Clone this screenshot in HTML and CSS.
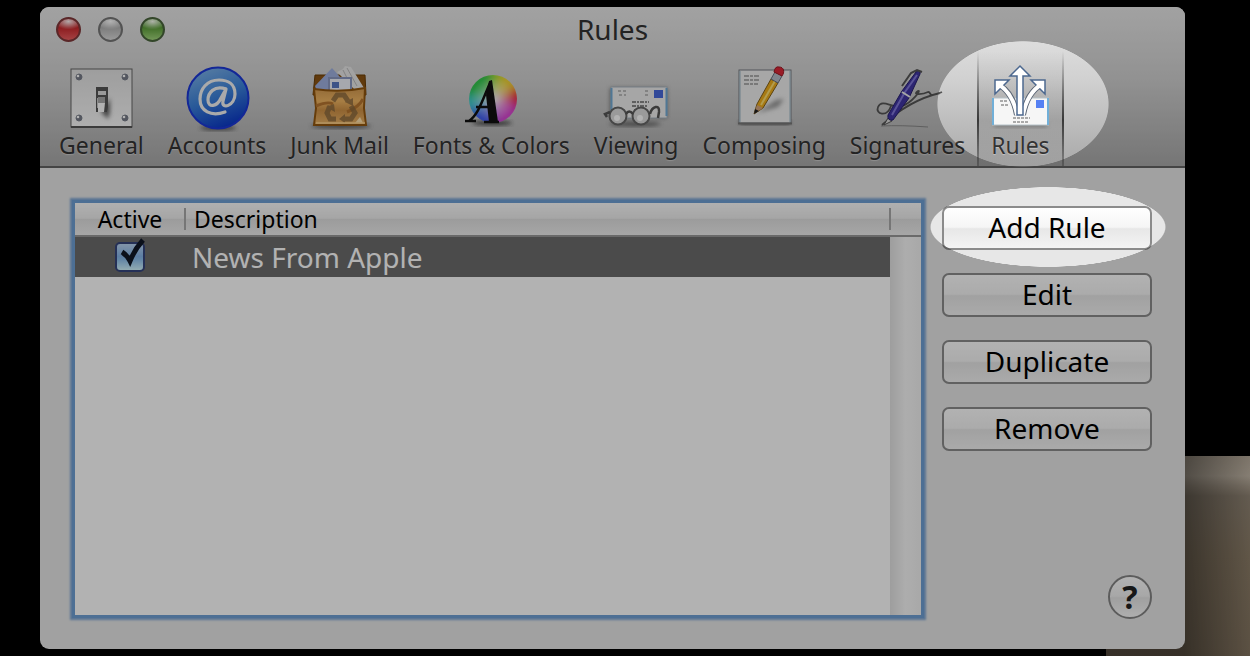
FILE: index.html
```html
<!DOCTYPE html>
<html lang="en">
<head>
<meta charset="utf-8">
<title>Rules</title>
<link rel="stylesheet" href="styles.css">
</head>
<body>
<main class="window">
  <header class="chrome">
    <div class="titlebar">
      <div class="lights">
        <button class="light light-red" aria-label="Close"></button>
        <button class="light light-gray" aria-label="Minimize"></button>
        <button class="light light-green" aria-label="Zoom"></button>
      </div>
      <h1 class="title">Rules</h1>
    </div>
    <nav class="toolbar">
      <button class="tool">
        <svg class="icon" viewBox="0 0 72 68">
          <defs>
            <linearGradient id="plate" x1="0" y1="0" x2="0" y2="1"><stop offset="0" stop-color="#e2e2e2"/><stop offset="1" stop-color="#fafafa"/></linearGradient>
            <filter id="soft" x="-50%" y="-50%" width="200%" height="200%"><feGaussianBlur stdDeviation="2"/></filter>
          </defs>
          <rect x="6" y="5" width="61" height="58" fill="url(#plate)" stroke="#666"/>
          <path d="M6 63h61" stroke="#555" stroke-width="2"/>
          <g fill="#777c88" stroke="#7a7f8b"><circle cx="14" cy="13" r="3"/><circle cx="60" cy="13" r="3"/><circle cx="14" cy="54" r="3"/><circle cx="60" cy="54" r="3"/></g>
          <g fill="#fff"><circle cx="13" cy="12" r="1.300"/><circle cx="59" cy="12" r="1.300"/><circle cx="13" cy="53" r="1.300"/><circle cx="59" cy="53" r="1.300"/></g>
          <path d="M36 48l9-14v14l-2 7z" fill="#666" filter="url(#soft)"/>
          <path d="M31 23h12v20l-1 5H31z" fill="#555"/>
          <path d="M33 27h8v4h-8z" fill="#ddd"/>
          <path d="M33 33h7v6h-7z" fill="#aaa"/>
          <path d="M32 34h1v10h-1z" fill="#ccc"/>
          <path d="M33 39h7l-1 9h-6z" fill="#fff"/>
        </svg>
        <span>General</span>
      </button>
      <button class="tool">
        <svg class="icon" viewBox="0 0 72 68">
          <defs><linearGradient id="orb" x1=".2" y1="0" x2=".6" y2="1"><stop offset="0" stop-color="#7fb4ea"/><stop offset=".5" stop-color="#3d83dc"/><stop offset="1" stop-color="#0a38c8"/></linearGradient></defs>
          <ellipse cx="37" cy="64" rx="18" ry="2" fill="#444" filter="url(#soft)"/>
          <circle cx="37" cy="34" r="30.500" fill="url(#orb)" stroke="#1c38d8" stroke-width="2"/>
          <path d="M45 25c-12-4-18 4-18 11 0 8 9 7 13-2l5-9-3 12c-2 9 12 5 12-7 0-10-7-14-16-14-12 0-19 9-19 19 0 12 11 18 25 13" fill="none" stroke="#f4f4f4" stroke-width="3.200" stroke-linecap="round" stroke-linejoin="round"/>
        </svg>
        <span>Accounts</span>
      </button>
      <button class="tool">
        <svg class="icon" viewBox="0 0 72 68">
          <defs><linearGradient id="bag" x1="0" y1="0" x2="0" y2="1"><stop offset="0" stop-color="#d39a50"/><stop offset=".35" stop-color="#f0b562"/><stop offset=".6" stop-color="#cf9146"/><stop offset="1" stop-color="#eab467"/></linearGradient></defs>
          <ellipse cx="37" cy="62" rx="30" ry="2" fill="#444" filter="url(#soft)"/>
          <path d="M11 11h50l1 20H9z" fill="#8b5413" stroke="#6a3c05"/>
          <path d="M11 22L28 4l16 18v8H14z" fill="#9fb0e0"/>
          <path d="M33 8l6-3 2-3 6 1 13 21-6 5z" fill="#e8e8e8"/>
          <path d="M39 6l6 12M43 4l10 18" stroke="#bbb"/>
          <rect x="25" y="14" width="22" height="16" fill="#eef1fa" stroke="#8b99c0" stroke-width="2"/>
          <rect x="28" y="18" width="7" height="6" fill="#5878c2"/>
          <path d="M10 25q26 4 51-1l-1 20 2 17H10l2-17z" fill="url(#bag)" stroke="#93570f" stroke-width="2"/>
          <path d="M12 42q12-5 17-2m30-5q-4 8-16 13" fill="none" stroke="#b87630" stroke-width="3"/>
          <g opacity=".75"><path d="M29 37l4-6h7l4 6M47 42l4 7-4 6h-7M32 55h-6l-3-6 3-7" fill="none" stroke="#85653c" stroke-width="5"/>
          <path d="M41 38l8-4v8zM41 50v9l-6-4zM22 43l8-3 1 8z" fill="#85653c"/></g>
          <path d="M56 53l3 6h-8z" fill="#ffe2ae"/>
          <path d="M12 59h49" stroke="#ffd38c" stroke-width="1.500"/>
        </svg>
        <span>Junk Mail</span>
      </button>
      <button class="tool">
        <svg class="icon" viewBox="0 0 72 68">
          <defs>
            <clipPath id="disc"><circle cx="38" cy="35" r="24"/></clipPath>
            <radialGradient id="discGlow"><stop offset="0" stop-color="#fff" stop-opacity=".85"/><stop offset="1" stop-color="#fff" stop-opacity="0"/></radialGradient>
            <filter id="blend" x="-20%" y="-20%" width="140%" height="140%"><feGaussianBlur stdDeviation="5"/></filter>
          </defs>
          <ellipse cx="37" cy="59" rx="20" ry="2" fill="#333" filter="url(#soft)"/>
          <g clip-path="url(#disc)"><g filter="url(#blend)">
            <path d="M38 35L6 45V-5h34z" fill="#35c850"/>
            <path d="M38 35L35-5h20z" fill="#9ee03c"/>
            <path d="M38 35L50-5h30v25z" fill="#f0d43a"/>
            <path d="M38 35l42-20v35z" fill="#ee3a4c"/>
            <path d="M38 35l42 12v33H40z" fill="#d84ad2"/>
            <path d="M38 35l5 45H0V50z" fill="#4762f0"/>
            <path d="M38 35L0 55V30z" fill="#46cfd0"/>
          </g><circle cx="38" cy="35" r="22" fill="url(#discGlow)"/></g>
          <path d="M10 57h11M14 57C24 50 28 34 35 19M21 43h17M29 58h15" fill="none" stroke="#111" stroke-width="2.500"/>
          <path d="M34 17l3-1 6 42h-9l-3-27z" fill="#111"/>
        </svg>
        <span>Fonts &amp; Colors</span>
      </button>
      <button class="tool">
        <svg class="icon" viewBox="0 0 72 68">
          <rect x="10" y="24" width="57" height="30" fill="#777" filter="url(#soft)"/>
          <rect x="11" y="23" width="56" height="31" fill="#eee" stroke="#a9b6c0"/>
          <path d="M11.500 24v28M66.500 24v28" stroke="#73abd4" stroke-width="2"/>
          <rect x="54" y="26" width="9" height="8" fill="#4869dc"/>
          <path d="M18 27h8m-7 4h7m19-4h4m-4 4h4" stroke="#bbb" stroke-width="2" stroke-dasharray="3 2"/>
          <path d="M32 38h17M32 42h16M34 46h13" stroke="#888" stroke-width="2" stroke-dasharray="4 1 2 1"/>
          <ellipse cx="35" cy="60" rx="26" ry="2" fill="#555" filter="url(#soft)"/>
          <g fill="#ddd" stroke="#666" stroke-width="2"><circle cx="18" cy="52" r="8.500"/><circle cx="41" cy="52" r="8.500"/></g>
          <path d="M26 50q3-5 7 0M10 48l-5 2 2 3M50 50c2-8 10-10 9-2l-1 6" fill="none" stroke="#555" stroke-width="2.500"/>
          <g fill="#fff"><circle cx="17" cy="54" r="3"/><circle cx="40" cy="54" r="3"/></g>
        </svg>
        <span>Viewing</span>
      </button>
      <button class="tool">
        <svg class="icon" viewBox="0 0 72 68">
          <path d="M12 57h50v3H12z" fill="#333" filter="url(#soft)"/>
          <rect x="11" y="6" width="52" height="53" fill="#efefef" stroke="#777b82"/>
          <path d="M12 7v51M62 7v51" stroke="#9db8c6"/>
          <path d="M10 59.500h54" stroke="#777" stroke-width="2"/>
          <path d="M16 12h16M16 16h15M16 20h14" stroke="#999" stroke-width="1.500" stroke-dasharray="5 1 3 1"/>
          <path d="M29 49l19-13 8-1-6 8z" fill="#999" filter="url(#soft)"/>
          <path d="M26 50l3-10L43 15l7 4-15 25z" fill="#efae1c" stroke="#83611a"/>
          <path d="M33 41l14-24" stroke="#ffe070" stroke-width="2"/>
          <path d="M26 50l3-9 6 3z" fill="#d6a67e"/><path d="M26 50l1-5 4 2z" fill="#222"/>
          <path d="M43 15l4-7 7 4-4 7z" fill="#b8bec9" stroke="#687080"/>
          <path d="M46 8q1-6 5-5c5 0 6 5 3 9z" fill="#dc2837" stroke="#9c1925"/>
        </svg>
        <span>Composing</span>
      </button>
      <button class="tool">
        <svg class="icon" viewBox="0 0 72 68">
          <path d="M10 62q20-1 47 1" stroke="#888" fill="none" stroke-width="1"/>
          <path d="M20 42c-4 12-16 8-13 1 4-9 15 2 24-1 10-3 20-17 16-15-7 5 6 3 10 1 4-1-2 7 14 0M11 61q28-25 58-32" fill="none" stroke="#555" stroke-width="1.800"/>
          <path d="M13 61l4-7 4 3z" fill="#ddd" stroke="#555"/>
          <path d="M17 51L31 27 45 8q5-4 4 2L38 34 22 56q-6 1-5-5z" fill="#4136a4" stroke="#28206f"/>
          <path d="M21 51l13-23L46 11" fill="none" stroke="#8178d8" stroke-width="2"/>
          <path d="M31 22L40 9l6-3 5 2" fill="none" stroke="#555" stroke-width="2"/>
          <path d="M31 28l8 5" stroke="#eee" stroke-width="2"/>
        </svg>
        <span>Signatures</span>
      </button>
      <button class="tool tool-selected" aria-current="page">
        <svg class="icon" viewBox="0 0 72 68">
          <path d="M10 59h53v4H10z" fill="#777" filter="url(#soft)"/>
          <rect x="8.500" y="34" width="56" height="27" fill="#f6f6f6" stroke="#b6c2c8"/>
          <path d="M9 34v27M64 34v27" stroke="#71afd8" stroke-width="2"/>
          <rect x="52" y="36" width="8" height="8" fill="#5681f3"/>
          <path d="M16 37h8m-7 4h7M29 54h17M29 58h16" stroke="#aaa" stroke-width="2" stroke-dasharray="3 1"/>
          <g fill="none" stroke="#5b6675" stroke-width="6"><path d="M15 21Q29 29 33 51M57 21Q43 29 39 51"/></g>
          <g fill="#fff" stroke="#4c688f" stroke-width="1.500"><path d="M11 16h14L11 30zM61 16H47l14 14z"/></g>
          <g fill="none" stroke="#fff" stroke-width="4"><path d="M14 20Q29 29 33 51M58 20Q43 29 39 51"/></g>
          <path d="M33 51V12h-7L36 2l10 10h-7v39z" fill="#fff" stroke="#4c688f" stroke-width="1.500"/>
        </svg>
        <span>Rules</span>
      </button>
    </nav>
  </header>
  <section class="content">
    <div class="list">
      <table class="rules">
        <thead><tr><th class="col-active">Active</th><th class="col-desc">Description</th><th class="col-scroll"></th></tr></thead>
        <tbody><tr>
          <td class="cell-check"><label class="check"><input type="checkbox" checked aria-label="News From Apple active"><svg class="tick" viewBox="0 0 32 32"><path d="M7 14q5 3 8 9Q20 11 28 2" fill="none" stroke="#101828" stroke-width="5"/></svg></label></td>
          <td class="cell-desc">News From Apple</td>
          <td class="cell-scroll"></td>
        </tr></tbody>
      </table>
    </div>
    <aside class="actions">
      <button class="action">Add Rule</button>
      <button class="action">Edit</button>
      <button class="action">Duplicate</button>
      <button class="action">Remove</button>
      <button class="help" aria-label="Help">?</button>
    </aside>
  </section>
</main>
<div class="dim"></div>
</body>
</html>
```
FILE: styles.css
```css
* { box-sizing: border-box; }
body {
  margin: 0;
  min-height: 100vh;
  padding: 7px 65px 7px 40px;
  display: flex;
  position: relative;
  font-family: "Noto Sans", "Open Sans", sans-serif;
  color: #111;
  background-color: #000;
  background-image:
    linear-gradient(to right, rgba(0, 0, 0, .4) 78px, rgba(0, 0, 0, 0) 144px),
    linear-gradient(#b3a797 0, #c0b5a5 20px, #a69a8a 30px, #8f8373 40px, #8b7c67 100px, #837460 100%);
  background-size: 144px 200px;
  background-position: right bottom;
  background-repeat: no-repeat;
}
button { font: inherit; color: inherit; padding: 0; cursor: default; }
.window {
  flex: 1;
  display: flex;
  flex-direction: column;
  background: #e7e7e7;
  border-radius: 9px;
  overflow: hidden;
}
.chrome {
  background: linear-gradient(#e8e8e8, #d1d1d1 45%, #a9a9a9);
  border-bottom: 2px solid #626262;
}
.titlebar {
  height: 44px;
  display: grid;
  grid-template-columns: 1fr auto 1fr;
  align-items: center;
  padding: 0 16px;
}
.lights { display: flex; gap: 17px; }
.light {
  width: 25px;
  height: 25px;
  border-radius: 50%;
  border: 2px solid #777;
}
.light-red { background: radial-gradient(ellipse 14px 8px at 50% 12%, #fff0f0, rgba(255, 200, 200, 0)), linear-gradient(#c8282c 40%, #ee6062); border-color: #81383a; }
.light-gray { background: radial-gradient(ellipse 14px 8px at 50% 12%, #fff, rgba(255, 255, 255, 0)), linear-gradient(#b2b2b2 40%, #dcdcdc); }
.light-green { background: radial-gradient(ellipse 14px 8px at 50% 12%, #f8fff0, rgba(220, 255, 200, 0)), linear-gradient(#5b9d38 40%, #a4d87e); border-color: #49653c; }
.title { margin: 0; font-size: 28px; line-height: 34px; font-weight: 400; color: #333; }
.toolbar { display: flex; padding: 0 7px; height: 115px; }
.tool {
  display: flex;
  flex-direction: column;
  align-items: center;
  padding: 13px 12px 0;
  border: 0;
  background: none;
  font-size: 23px;
  line-height: 26px;
  color: #333;
  text-shadow: 0 1px 1px rgba(255, 255, 255, .4);
  white-space: nowrap;
}
.icon { width: 72px; height: 68px; margin: 0 -10px; overflow: visible; display: block; }
.tool-selected {
  padding: 13px 14px 0;
  background:
    linear-gradient(rgba(0, 0, 0, 0), rgba(0, 0, 0, .65) 60%, rgba(0, 0, 0, .2)) left / 2px 100% no-repeat,
    linear-gradient(rgba(0, 0, 0, 0), rgba(0, 0, 0, .65) 60%, rgba(0, 0, 0, .2)) right / 2px 100% no-repeat,
    linear-gradient(rgba(0, 0, 0, 0), rgba(0, 0, 0, .15) 60%, rgba(0, 0, 0, .05));
}
.content {
  flex: 1;
  display: flex;
  gap: 21px;
  padding: 35px 33px 30px 35px;
}
.list {
  flex: 1;
  margin-bottom: 4px;
  box-shadow: 0 0 0 3px #6f9fd4, 0 0 2px 5px #7fa6d2;
  background: linear-gradient(to right, #e2e2e2, #f8f8f8 50%, #f2f2f2) right / 31px 100% no-repeat #fff;
}
.rules { width: 100%; border-collapse: collapse; table-layout: fixed; }
.rules th {
  height: 33px;
  padding: 0;
  font-size: 23px;
  line-height: 28px;
  font-weight: 400;
  color: #000;
  background: linear-gradient(#fdfdfd, #ededed 48%, #dfdfdf 50%, #efefef);
  border-bottom: 2px solid #999;
}
.rules .col-active { width: 110px; }
.rules .col-desc { text-align: left; padding-left: 9px; }
.rules .col-scroll { width: 31px; }
.col-desc, .col-scroll { position: relative; }
.col-desc::before, .col-scroll::before {
  content: "";
  position: absolute;
  left: -1px;
  top: 5px;
  bottom: 5px;
  width: 2px;
  background: #aaa;
}
.rules td { height: 41px; padding: 0; }
.rules .cell-check { background: #6c6c6c; text-align: center; }
.rules .cell-desc { background: #6c6c6c; color: #fff; font-size: 28px; line-height: 34px; padding-left: 7px; }
.check { display: inline-block; position: relative; width: 30px; height: 30px; vertical-align: middle; }
.check input {
  appearance: none;
  display: block;
  width: 30px;
  height: 30px;
  margin: 0;
  border: 2px solid #35457c;
  border-radius: 5px;
  background: linear-gradient(#bad5f3, #86b5ea 48%, #8fc0ee 60%, #d2f6ff);
}
.tick { position: absolute; left: 0; top: -4px; width: 32px; height: 32px; pointer-events: none; }
.actions {
  width: 210px;
  padding-top: 3px;
  display: flex;
  flex-direction: column;
  gap: 23px;
}
.action {
  height: 44px;
  padding-bottom: 2px;
  border: 2px solid #8b8b8b;
  border-radius: 7px;
  background: linear-gradient(#fff, #f5f5f5 48%, #e7e7e7 52%, #f4f4f4);
  font-size: 28px;
  line-height: 34px;
  color: #000;
}
.help {
  width: 44px;
  height: 44px;
  margin: auto 0 0 auto;
  border: 2px solid #858585;
  border-radius: 50%;
  background: linear-gradient(#fff, #f0f0f0 48%, #e5e5e5 52%, #fafafa);
  font-size: 32px;
  line-height: 36px;
  font-weight: 700;
  color: #222;
}
/* Darkens the page except for two elliptical highlights. */
.dim {
  position: absolute;
  inset: 0;
  pointer-events: none;
  background: rgba(0, 0, 0, .3);
  -webkit-mask-image:
    radial-gradient(ellipse 86px 63px at 1023px 104px, transparent 99%, #000 100%),
    radial-gradient(ellipse 118px 40px at calc(100% - 202px) 227px, transparent 99%, #000 100%);
  -webkit-mask-composite: source-in;
  mask-image:
    radial-gradient(ellipse 86px 63px at 1023px 104px, transparent 99%, #000 100%),
    radial-gradient(ellipse 118px 40px at calc(100% - 202px) 227px, transparent 99%, #000 100%);
  mask-composite: intersect;
}
```
